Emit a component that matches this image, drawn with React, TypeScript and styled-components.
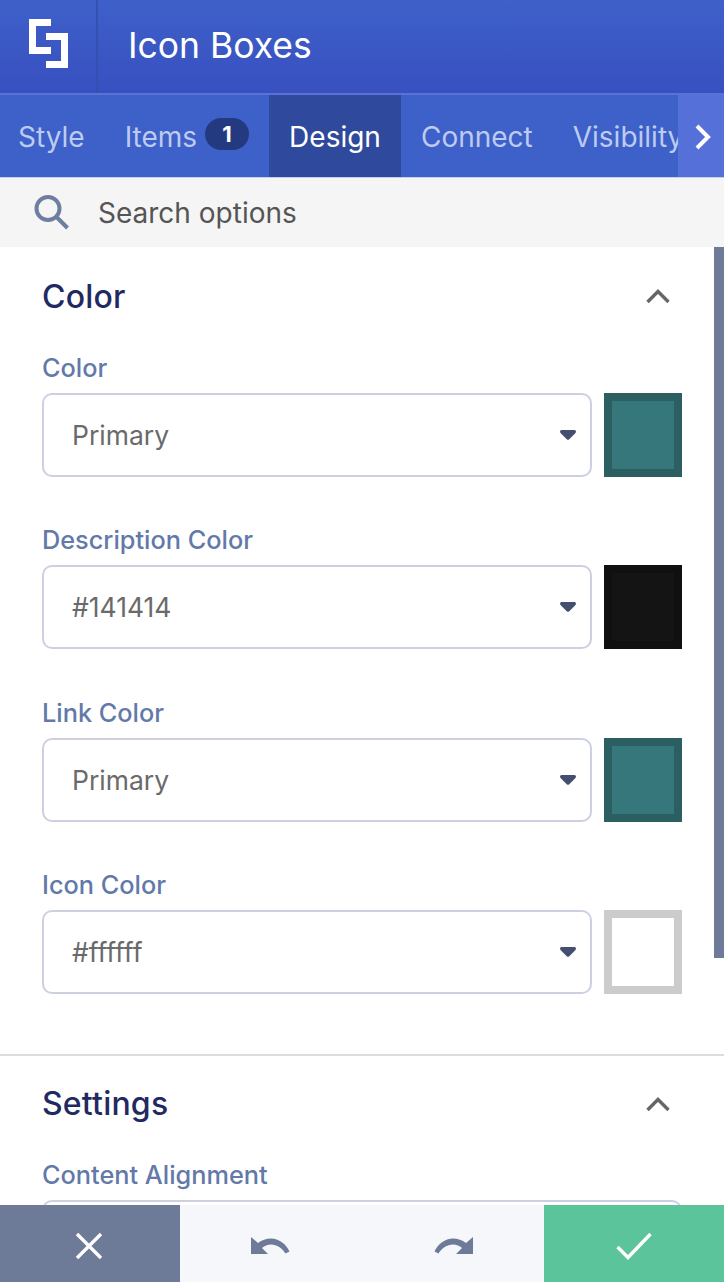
import React from "react"
import styled, { createGlobalStyle } from "styled-components"

const GlobalStyle = createGlobalStyle`
    html, body {
        margin: 0;
        padding: 0;
        background: #ffffff;
    }
    * {
        box-sizing: border-box;
    }
`

const Page = styled.div`
    position: relative;
    display: flex;
    flex-direction: column;
    width: 724px;
    height: 1282px;
    overflow: hidden;
    font-family: "Inter", "Liberation Sans", sans-serif;
`

const Header = styled.div`
    display: flex;
    align-items: stretch;
    flex: 0 0 95px;
    background: linear-gradient(180deg, #3e60c9 0%, #3850c0 100%);
    border-bottom: 2px solid #5a72d6;
`

const LogoBox = styled.div`
    display: flex;
    align-items: center;
    justify-content: center;
    width: 98px;
    padding-bottom: 6px;
    border-right: 2px solid #3450b0;
`

const Title = styled.div`
    display: flex;
    align-items: center;
    padding: 0 0 3px 30px;
    font-size: 35.5px;
    color: #ffffff;
`

const Tabs = styled.div`
    display: flex;
    align-items: stretch;
    position: relative;
    flex: 0 0 83px;
    overflow: hidden;
    background: #3d60c9;
    border-bottom: 1px solid #c5cfee;
`

const Tab = styled.div<{ $active?: boolean }>`
    display: flex;
    align-items: center;
    flex: none;
    gap: 8px;
    padding: 1px 20px 0;
    font-size: 28px;
    color: ${props => (props.$active ? "#ffffff" : "#bdcbf0")};
    background: ${props => (props.$active ? "#2f4a9c" : "transparent")};
`

const FirstTab = styled(Tab)`
    padding-left: 18px;
`

const Badge = styled.span`
    display: inline-flex;
    align-items: center;
    justify-content: center;
    width: 44px;
    height: 32px;
    margin-top: -5px;
    border-radius: 16px;
    background: #243a80;
    color: #ffffff;
    font-size: 22px;
    font-weight: 700;
`

const ScrollArrow = styled.div`
    position: absolute;
    top: 0;
    right: 0;
    bottom: -1px;
    width: 46px;
    display: flex;
    align-items: center;
    justify-content: center;
    padding-left: 4px;
    background: #5570d8;
`

const SearchBar = styled.div`
    display: flex;
    align-items: center;
    flex: 0 0 69px;
    gap: 28px;
    padding-left: 33px;
    background: #f5f5f5;
    font-size: 28px;
    color: #555555;
`

const Scroller = styled.div`
    position: relative;
    flex: 1;
    overflow: hidden;
`

const ScrollThumb = styled.div`
    position: absolute;
    top: 0;
    right: 0;
    width: 10px;
    height: 711px;
    background: #6d7a98;
`

const SectionHead = styled.div`
    display: flex;
    align-items: center;
    justify-content: space-between;
    height: 40px;
    margin-bottom: 37px;
    padding-right: 12px;
`

const Section = styled.section`
    padding: 29px 42px 59.5px 42px;
`

const DividedSection = styled(Section)`
    border-top: 2px solid #dddddd;
    padding-top: 28px;

    ${SectionHead} {
        margin-bottom: 36px;
    }
`

const SectionTitle = styled.h2`
    margin: 0;
    font-size: 32px;
    font-weight: 500;
    letter-spacing: 0.2px;
    color: #1f2a62;
`

const Field = styled.div`
    margin-bottom: 48.4px;

    &:last-child {
        margin-bottom: 0;
    }
`

const Label = styled.div`
    height: 30px;
    margin-bottom: 10px;
    font-size: 25.3px;
    line-height: 30.6px;
    font-weight: 500;
    color: #6279a9;
`

const FieldRow = styled.div`
    display: flex;
    gap: 12px;
`

const Select = styled.div<{ $full?: boolean }>`
    display: flex;
    align-items: center;
    justify-content: space-between;
    width: ${props => (props.$full ? "640px" : "550px")};
    height: 84px;
    padding: 0 14px 0 28px;
    border: 2px solid #cdd0e0;
    border-radius: 10px;
    background: #ffffff;
    font-size: 26.5px;
    color: #6a6a6a;
`

const Swatch = styled.div<{ $fill: string; $edge: string }>`
    width: 78px;
    height: 84px;
    border: 8px solid ${props => props.$edge};
    background: ${props => props.$fill};
`

const Footer = styled.div`
    display: flex;
    flex: 0 0 77px;
    position: relative;
    background: #f5f7fb;
`

const FooterButton = styled.div<{ $bg: string; $width: number }>`
    display: flex;
    align-items: center;
    justify-content: center;
    width: ${props => props.$width}px;
    padding-top: 5px;
    background: ${props => props.$bg};
`

const CancelButton = styled(FooterButton)`
    padding-right: 2px;
`

const LogoIcon = () => (
    <svg width="39" height="49" viewBox="0 0 39 49">
        <path fill="#ffffff" d="M0 0h22v7H7v21h15v7H0z" />
        <path fill="#ffffff" d="M17 14h22v35H17v-7h15V21H17z" />
    </svg>
)

const ChevronRight = () => (
    <svg width="18" height="26" viewBox="0 0 18 26">
        <path d="M3 2l11 11L3 24" fill="none" stroke="#ffffff" strokeWidth="4" />
    </svg>
)

const SearchIcon = () => (
    <svg width="37" height="37" viewBox="0 0 37 37">
        <circle cx="15" cy="14.5" r="11.5" fill="none" stroke="#6d7f9f" strokeWidth="4" />
        <path d="M23.5 23l11 11" fill="none" stroke="#6d7f9f" strokeWidth="4" />
    </svg>
)

const ChevronUp = () => (
    <svg width="24" height="16" viewBox="0 0 24 16">
        <path d="M1.5 14L12 3.5 22.5 14" fill="none" stroke="#666666" strokeWidth="3.4" />
    </svg>
)

const Caret = () => (
    <svg width="16" height="10" viewBox="0 0 16 10">
        <path d="M0 1.5Q0 0 1.5 0h13Q16 0 16 1.5Q16 2.5 15 3.5L9 9.5Q8 10 7 9.5L1 3.5Q0 2.5 0 1.5z" fill="#444e6e" />
    </svg>
)

const CloseIcon = () => (
    <svg width="28" height="28" viewBox="0 0 28 28">
        <path d="M2 2l24 24M26 2L2 26" fill="none" stroke="#ffffff" strokeWidth="3.4" />
    </svg>
)

const UndoIcon = () => (
    <svg width="40" height="20" viewBox="0 0 40 20">
        <path d="M0 1v17h17l-6-6c2.500-2 5.500-3.500 9-3.500 6 0 11 3.500 14.500 9l4-2C35 8 28 2.500 20 2.500c-5 0-9 1.500-13 4.500z" fill="#6d7a98" />
    </svg>
)

const RedoIcon = () => (
    <svg width="40" height="20" viewBox="0 0 40 20">
        <path d="M40 1v17H23l6-6c-2.500-2-5.500-3.500-9-3.500-6 0-11 3.500-14.500 9l-4-2C5 8 12 2.500 20 2.500c5 0 9 1.500 13 4.500z" fill="#6d7a98" />
    </svg>
)

const CheckIcon = () => (
    <svg width="36" height="28" viewBox="0 0 36 28">
        <path d="M1.5 15l10.500 10.500L34.500 2" fill="none" stroke="#ffffff" strokeWidth="3.4" />
    </svg>
)

const colorFields = [
    { label: "Color", value: "Primary", fill: "#36777c", edge: "#2c5f62" },
    { label: "Description Color", value: "#141414", fill: "#141414", edge: "#101010" },
    { label: "Link Color", value: "Primary", fill: "#36777c", edge: "#2c5f62" },
    { label: "Icon Color", value: "#ffffff", fill: "#ffffff", edge: "#cccccc" },
]

export default function App() {
    return (
        <Page>
            <GlobalStyle />
            <Header>
                <LogoBox>
                    <LogoIcon />
                </LogoBox>
                <Title>Icon Boxes</Title>
            </Header>
            <Tabs>
                <FirstTab>Style</FirstTab>
                <Tab>
                    Items
                    <Badge>1</Badge>
                </Tab>
                <Tab $active>Design</Tab>
                <Tab>Connect</Tab>
                <Tab>Visibility</Tab>
                <ScrollArrow>
                    <ChevronRight />
                </ScrollArrow>
            </Tabs>
            <SearchBar>
                <SearchIcon />
                Search options
            </SearchBar>
            <Scroller>
                <ScrollThumb />
                <Section>
                    <SectionHead>
                        <SectionTitle>Color</SectionTitle>
                        <ChevronUp />
                    </SectionHead>
                    {colorFields.map(field => (
                        <Field key={field.label}>
                            <Label>{field.label}</Label>
                            <FieldRow>
                                <Select>
                                    {field.value}
                                    <Caret />
                                </Select>
                                <Swatch $fill={field.fill} $edge={field.edge} />
                            </FieldRow>
                        </Field>
                    ))}
                </Section>
                <DividedSection>
                    <SectionHead>
                        <SectionTitle>Settings</SectionTitle>
                        <ChevronUp />
                    </SectionHead>
                    <Field>
                        <Label>Content Alignment</Label>
                        <Select $full />
                    </Field>
                </DividedSection>
            </Scroller>
            <Footer>
                <CancelButton $bg="#6d7a98" $width={180}>
                    <CloseIcon />
                </CancelButton>
                <FooterButton $bg="#f5f7fb" $width={182}>
                    <UndoIcon />
                </FooterButton>
                <FooterButton $bg="#f5f7fb" $width={182}>
                    <RedoIcon />
                </FooterButton>
                <FooterButton $bg="#5cc49a" $width={180}>
                    <CheckIcon />
                </FooterButton>
            </Footer>
        </Page>
    )
}
